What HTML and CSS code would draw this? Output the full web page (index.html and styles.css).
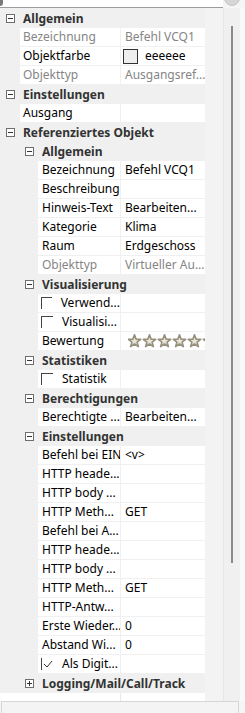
FILE: index.html
```html
<!DOCTYPE html>
<html lang="de">
<head>
  <meta charset="UTF-8">
  <meta name="viewport" content="width=device-width, initial-scale=1.0">
  <title>Eigenschaften</title>
  <link rel="stylesheet" href="styles.css">
</head>
<body>
  <svg class="defs" width="0" height="0">
    <defs>
      <linearGradient id="starfill" x1="0" y1="0" x2="0" y2="1">
        <stop offset="0" stop-color="#f6f4ee"/>
        <stop offset="1" stop-color="#dcd8cc"/>
      </linearGradient>
      <path id="star" d="M6.5 0.8 L8.1 5.1 L12.7 5.25 L9.1 8.1 L10.4 12.6 L6.5 10 L2.6 12.6 L3.9 8.1 L0.3 5.25 L4.9 5.1 Z"/>
    </defs>
  </svg>

  <div class="topbar">
    <div class="corner"></div>
    <div class="knob"></div>
  </div>

  <div class="main">
    <div class="grid">
      <div class="cat l1"><span class="tog"></span>Allgemein</div>
      <div class="prop l1"><div class="pn ro">Bezeichnung</div><div class="pv ro">Befehl VCQ1</div></div>
      <div class="prop l1"><div class="pn">Objektfarbe</div><div class="pv"><span class="swatch"></span>eeeeee</div></div>
      <div class="prop l1"><div class="pn ro">Objekttyp</div><div class="pv ro">Ausgangsref...</div></div>

      <div class="cat l1"><span class="tog"></span>Einstellungen</div>
      <div class="prop l1"><div class="pn">Ausgang</div><div class="pv"></div></div>

      <div class="cat l1"><span class="tog"></span>Referenziertes Objekt</div>

      <div class="cat l2"><span class="tog"></span>Allgemein</div>
      <div class="prop l2"><div class="pn">Bezeichnung</div><div class="pv">Befehl VCQ1</div></div>
      <div class="prop l2"><div class="pn">Beschreibung</div><div class="pv"></div></div>
      <div class="prop l2"><div class="pn">Hinweis-Text</div><div class="pv">Bearbeiten...</div></div>
      <div class="prop l2"><div class="pn">Kategorie</div><div class="pv">Klima</div></div>
      <div class="prop l2"><div class="pn">Raum</div><div class="pv">Erdgeschoss</div></div>
      <div class="prop l2"><div class="pn ro">Objekttyp</div><div class="pv ro">Virtueller Au...</div></div>

      <div class="cat l2"><span class="tog"></span>Visualisierung</div>
      <div class="prop l2"><div class="pn"><span class="cb"></span>Verwend...</div><div class="pv"></div></div>
      <div class="prop l2"><div class="pn"><span class="cb"></span>Visualisi...</div><div class="pv"></div></div>
      <div class="prop l2"><div class="pn">Bewertung</div>
        <div class="pv stars">
          <svg width="90" height="14" viewBox="0 0 90 14">
            <use href="#star" x="0"/>
            <use href="#star" x="15"/>
            <use href="#star" x="30"/>
            <use href="#star" x="45"/>
            <use href="#star" x="60"/>
            <use href="#star" x="75"/>
          </svg>
        </div>
      </div>

      <div class="cat l2"><span class="tog"></span>Statistiken</div>
      <div class="prop l2"><div class="pn"><span class="cb"></span>Statistik</div><div class="pv"></div></div>

      <div class="cat l2"><span class="tog"></span>Berechtigungen</div>
      <div class="prop l2"><div class="pn">Berechtigte ...</div><div class="pv">Bearbeiten...</div></div>

      <div class="cat l2"><span class="tog"></span>Einstellungen</div>
      <div class="prop l2"><div class="pn">Befehl bei EIN</div><div class="pv">&lt;v&gt;</div></div>
      <div class="prop l2"><div class="pn">HTTP heade...</div><div class="pv"></div></div>
      <div class="prop l2"><div class="pn">HTTP body ...</div><div class="pv"></div></div>
      <div class="prop l2"><div class="pn">HTTP Meth...</div><div class="pv">GET</div></div>
      <div class="prop l2"><div class="pn">Befehl bei A...</div><div class="pv"></div></div>
      <div class="prop l2"><div class="pn">HTTP heade...</div><div class="pv"></div></div>
      <div class="prop l2"><div class="pn">HTTP body ...</div><div class="pv"></div></div>
      <div class="prop l2"><div class="pn">HTTP Meth...</div><div class="pv">GET</div></div>
      <div class="prop l2"><div class="pn">HTTP-Antw...</div><div class="pv"></div></div>
      <div class="prop l2"><div class="pn">Erste Wieder...</div><div class="pv">0</div></div>
      <div class="prop l2"><div class="pn">Abstand Wi...</div><div class="pv">0</div></div>
      <div class="prop l2"><div class="pn"><span class="cb checked"><svg width="10" height="8" viewBox="0 0 10 8"><path d="M1 4 L4 7 L9 1" fill="none" stroke="#333" stroke-width="1"/></svg></span>Als Digit...</div><div class="pv"></div></div>

      <div class="cat l2"><span class="tog plus"></span>Logging/Mail/Call/Track</div>
      <div class="filler"></div>
    </div>
    <div class="gap"></div>
    <div class="vscroll"><div class="thumb"></div></div>
    <div class="edge"></div>
  </div>

  <div class="help"></div>
</body>
</html>
```

FILE: styles.css
```css
html, body {
  margin: 0;
  padding: 0;
}

body {
  width: 245px;
  height: 713px;
  overflow: hidden;
  background: #f5f5f5;
  font-family: "Noto Sans", "Open Sans", sans-serif;
  font-size: 12px;
  color: #000;
  position: relative;
}

.defs {
  position: absolute;
}

/* top strip */
.topbar {
  position: relative;
  height: 7px;
  width: 223px;
  background: #fff;
  border-bottom: 1px solid #9c9c9c;
}

.corner {
  position: absolute;
  left: 0;
  top: 0;
  width: 3px;
  height: 6px;
  background: #7a7a7a;
  border-bottom-right-radius: 3px;
}

.knob {
  position: absolute;
  left: 224px;
  top: -10px;
  width: 14px;
  height: 14px;
  border-radius: 50%;
  background: #d6d6d6;
  border: 1px solid #c4c4c4;
}

.main {
  display: flex;
  height: 693px;
}

/* property grid */
.grid {
  width: 205px;
  flex: 0 0 205px;
  display: flex;
  flex-direction: column;
  padding-top: 1px;
  background: #f0f0f0;
}

.cat {
  height: 19px;
  display: flex;
  align-items: center;
  font-weight: bold;
  color: #333;
  white-space: nowrap;
}

.cat.l1 {
  padding-left: 6px;
}

.cat.l2 {
  padding-left: 25px;
}

.tog {
  position: relative;
  box-sizing: border-box;
  width: 9px;
  height: 9px;
  border: 1px solid #6e6e6e;
  background: #fff;
  margin-right: 8px;
  flex: 0 0 9px;
}

.tog::before {
  content: "";
  position: absolute;
  left: 1px;
  top: 3px;
  width: 5px;
  height: 1px;
  background: #333;
}

.tog.plus::after {
  content: "";
  position: absolute;
  left: 3px;
  top: 1px;
  width: 1px;
  height: 5px;
  background: #333;
}

.prop {
  height: 18px;
  margin-bottom: 1px;
  display: flex;
  line-height: 18px;
  white-space: nowrap;
}

.prop.l1 {
  padding-left: 20px;
}

.prop.l2 {
  padding-left: 38px;
}

.pn {
  flex: 1;
  background: #fff;
  padding-left: 3px;
  overflow: hidden;
  display: flex;
  align-items: center;
}

.prop.l2 .pn {
  padding-left: 4px;
}

.pv {
  width: 80px;
  flex: 0 0 80px;
  margin-left: 1px;
  background: #fff;
  padding-left: 4px;
  overflow: hidden;
  display: flex;
  align-items: center;
}

.ro {
  color: #858585;
}

.swatch {
  box-sizing: border-box;
  width: 15px;
  height: 15px;
  border: 1px solid #333;
  background: #eeeeee;
  margin-left: -2px;
  margin-right: 7px;
}

.cb {
  box-sizing: border-box;
  width: 12px;
  height: 12px;
  margin-left: -1px;
  margin-right: 9px;
  border-top: 1px solid #444;
  border-left: 1px solid #444;
  display: flex;
  align-items: center;
  justify-content: center;
}

.cb.checked {
  border-top: none;
}

.stars {
  width: 77px;
  flex: 0 0 77px;
  padding-left: 7px;
}

.stars svg {
  display: block;
  flex: 0 0 90px;
  fill: url(#starfill);
  stroke: #968f7b;
  stroke-width: 1.6;
  stroke-linejoin: round;
}

.filler {
  flex: 1;
  background: linear-gradient(to right, #fff 0, #fff 120px, #e8e8e8 120px, #e8e8e8 121px, #fff 121px);
}

/* right side */
.gap {
  width: 18px;
  background: #f3f3f3;
}

.vscroll {
  width: 16px;
  border-left: 1px solid #e6e6e6;
  background: #f0f0f0;
  display: flex;
  flex-direction: column;
}

.thumb {
  width: 2px;
  height: 537px;
  margin-top: 18px;
  margin-left: 7px;
  background: #8a8a8a;
}

.edge {
  flex: 1;
  background: #f9f9f9;
}

.help {
  box-sizing: border-box;
  height: 12px;
  margin: 0 6px 0 1px;
  border: 1px solid #d6d6d6;
  border-bottom: none;
  background: #f4f4f4;
}
```
